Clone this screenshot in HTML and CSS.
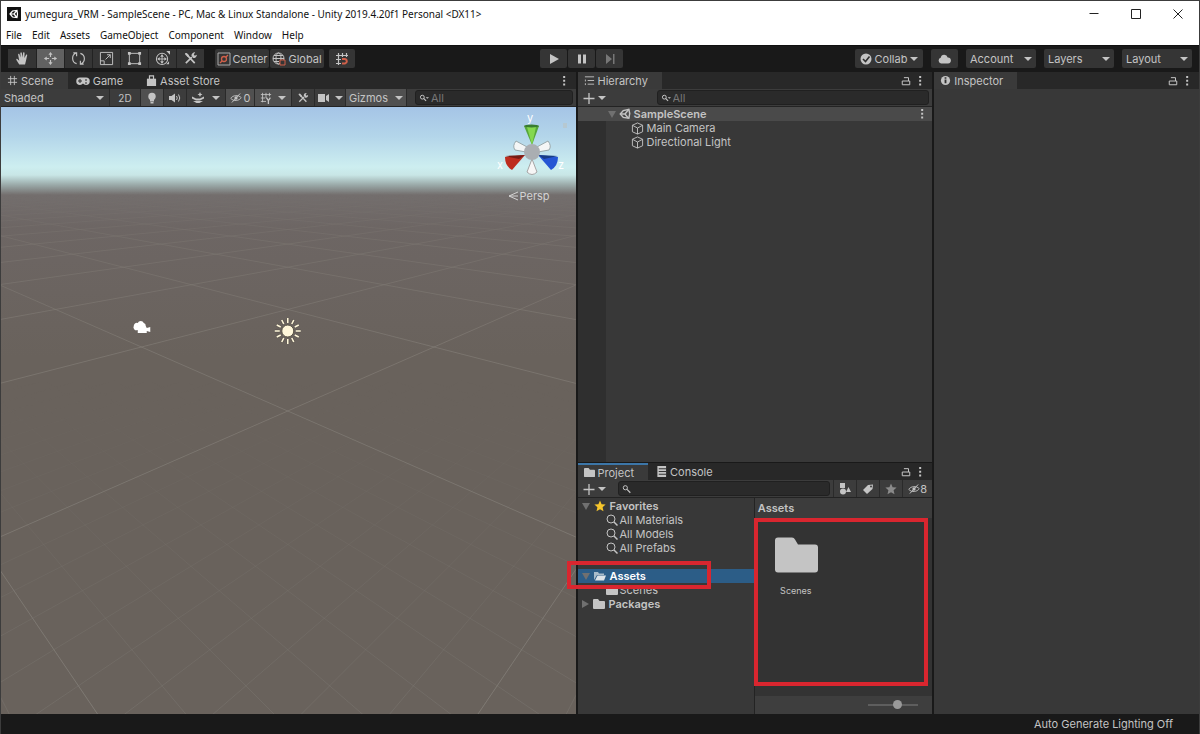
FILE: index.html
```html
<!DOCTYPE html>
<html lang="en">
<head>
  <meta charset="UTF-8" />
  <meta name="viewport" content="width=device-width, initial-scale=1.0"/>
  <title>yumegura_VRM - SampleScene - Unity</title>
  <link rel="stylesheet" href="styles.css">
</head>
<body>
  <!-- shared icons -->
  <svg class="defs" aria-hidden="true">
    <symbol id="i-tools" viewBox="0 0 16 16"><path d="M3 13 9.500 6.500M5 5l7.500 8" fill="none" stroke="currentColor" stroke-width="1.800"/><path d="M2 2.500 4 2l2.500 2.500-1.500 2L2.500 4zM9 5a3.500 3.500 0 0 1 4-3.500L11.500 3.500l1 1.500 2.300-1A3.500 3.500 0 0 1 11 7.500z" fill="currentColor"/></symbol>
    <symbol id="i-lock" viewBox="0 0 12 12"><path d="M1.500 6h9v4.500h-9zM3.500 2h5.500v4" fill="none" stroke="currentColor" stroke-width="1.200"/></symbol>
    <symbol id="i-dots" viewBox="0 0 12 12"><path d="M5 0h2.400v2.400H5zM5 4.500h2.400v2.400H5zM5 9h2.400v2.400H5z" fill="currentColor"/></symbol>
    <symbol id="i-search" viewBox="0 0 12 12"><circle cx="4" cy="4.500" r="2.500" fill="none" stroke="currentColor" stroke-width="1.200"/><path d="m6 6.500 4 4" stroke="currentColor" stroke-width="1.500"/></symbol>
    <symbol id="i-find" viewBox="0 0 12 12"><circle cx="5" cy="5" r="4" fill="none" stroke="currentColor"/><path d="m8 8 3.500 3.500" stroke="currentColor" stroke-width="1.500"/></symbol>
    <symbol id="i-searchmenu" viewBox="0 0 12 12"><circle cx="4" cy="5" r="2.300" fill="none" stroke="currentColor" stroke-width="1.200"/><path d="m5.500 6.500 3 3" stroke="currentColor" stroke-width="1.400"/><path d="M8 5h4l-2 2z" fill="currentColor"/></symbol>
    <symbol id="i-folder" viewBox="0 0 12 12"><path d="M0 2q0-1 1-1h4l1.500 2H11q1 0 1 1v6q0 1-1 1H1q-1 0-1-1z" fill="currentColor"/></symbol>
    <symbol id="i-eye" viewBox="0 0 16 14"><path d="M1 7.500C4 3 11 2.500 15 6.500 12 11 5 12 1 7.500z" fill="none" stroke="currentColor" stroke-width="1.200"/><circle cx="8" cy="7" r="2.200" fill="currentColor"/><path d="M2.500 13 13.500 1" stroke="currentColor" stroke-width="1.300"/></symbol>
    <symbol id="i-cube" viewBox="0 0 14 14"><path d="M7 1l5.500 2.500v7L7 13l-5.500-2.500v-7zM1.500 3.500 7 6.500l5.500-3M7 6.500V13" fill="none" stroke="currentColor" stroke-linejoin="round"/></symbol>
    <symbol id="i-unity" viewBox="0 0 14 14"><path d="m1.500 7 3.500-4 6.500-1.500 1 5-1 5.500L5 11z" fill="none" stroke="currentColor" stroke-width="1.700"/><path d="M1.500 7H7l4.500-5.500M7 7l4 5" fill="none" stroke="currentColor" stroke-width="1.600"/></symbol>
    <symbol id="i-star" viewBox="0 0 12 12"><path d="m6 .5 1.600 3.700 4 .4-3 2.700.9 4L6 9.200 2.500 11.300l.9-4-3-2.700 4-.4z" fill="currentColor"/></symbol>
  </svg>

  <header class="titlebar">
    <svg class="app-icon" viewBox="0 0 14 14"><path d="M0 0h14v14H0z" fill="#111"/><path d="m3 7 2.500-3L10 3.500l.5 3.500-.5 3.500L5.500 10zM3 7h4l3-3.500M7 7l3 3.500" fill="none" stroke="#fff" stroke-width="1.200"/></svg>
    <h1>yumegura_VRM - SampleScene - PC, Mac &amp; Linux Standalone - Unity 2019.4.20f1 Personal &lt;DX11&gt;</h1>
    <div class="window-buttons">
      <button aria-label="Minimize"><svg viewBox="0 0 12 12"><path d="M1.500 5.500h9" stroke="#222"/></svg></button>
      <button aria-label="Maximize"><svg viewBox="0 0 12 12"><path d="M1.500 1.500h9v9h-9z" fill="none" stroke="#222"/></svg></button>
      <button aria-label="Close"><svg viewBox="0 0 12 12"><path d="m1.500 1.500 9 9m0-9-9 9" stroke="#222"/></svg></button>
    </div>
  </header>

  <nav class="menubar">
    <button>File</button>
    <button>Edit</button>
    <button>Assets</button>
    <button>GameObject</button>
    <button>Component</button>
    <button>Window</button>
    <button>Help</button>
  </nav>

  <div class="toolbar">
    <div class="group tools">
      <button class="tool" aria-label="Hand"><svg viewBox="0 0 16 16"><path d="M4.500 14.500 1.500 9.500q-.5-1.500 1-1l2 1.800L3.300 3.800q0-1.300 1.200-.8l1.500 4-.3-5q.8-1.500 1.600 0l.7 5 .7-5.300q.8-1 1.500.1L10 7.500l2-3.800q1.200-.4 1 .8l-1.300 6-1 4z" fill="currentColor"/></svg></button>
      <button class="tool active" aria-label="Move"><svg viewBox="0 0 16 16"><path d="M8 3v3.500M8 9.500V13M3 8h3.500M9.500 8H13" stroke="currentColor" stroke-width="1.200"/><path d="M8 1l2.200 3H5.800zM8 15l2.200-3H5.800zM1 8l3-2.200v4.400zM15 8l-3-2.200v4.400z" fill="currentColor"/></svg></button>
      <button class="tool" aria-label="Rotate"><svg viewBox="0 0 16 16"><path d="M6 13.500C.5 12 .5 4.500 5 2.500M10 2.500c5.500 1.500 5.500 9 1 11M2.500 2h3.500v3.500M13.500 14H10v-3.500" fill="none" stroke="currentColor" stroke-width="1.200"/></svg></button>
      <button class="tool" aria-label="Scale"><svg viewBox="0 0 16 16"><path d="M1.500 1.500h13v13h-13zM1.500 10.500h4v4M7 9l5-5M8.500 4H12v3.500" fill="none" stroke="currentColor"/></svg></button>
      <button class="tool" aria-label="Rect"><svg viewBox="0 0 16 16"><path d="M2.500 2.500h11v11h-11z" fill="none" stroke="currentColor"/><path d="M1 1h3v3H1zM12 1h3v3h-3zM1 12h3v3H1zM12 12h3v3h-3z" fill="currentColor"/></svg></button>
      <button class="tool" aria-label="Transform"><svg viewBox="0 0 16 16"><circle cx="7.500" cy="8.500" r="6" fill="none" stroke="currentColor" stroke-width="1.100"/><path d="M7.500 4v9M3 8.500h9" stroke="currentColor"/><path d="M7.500 3.500l2 2.500h-4zM7.500 13.500l2-2.500h-4zM2.500 8.500 5 6.500v4zM12.500 8.500l-2.500-2v4zM12 0h4v4zM12 14h3v-3z" fill="currentColor"/></svg></button>
      <button class="tool" aria-label="Custom tools"><svg><use href="#i-tools"/></svg></button>
    </div>
    <div class="group pivot">
      <button><svg viewBox="0 0 14 14"><path d="M1 1h12v12H1z" fill="none" stroke="#aaa"/><circle cx="7" cy="7" r="2.500" fill="none" stroke="#d0604a" stroke-width="1.300"/><path d="m3 11 2-2m4-4 2-2" stroke="#d0604a" stroke-width="1.300"/></svg>Center</button>
      <button><svg viewBox="0 0 14 14"><circle cx="6.500" cy="6.500" r="5.500" fill="none" stroke="currentColor"/><ellipse cx="6.500" cy="6.500" rx="2.500" ry="5.500" fill="none" stroke="currentColor"/><path d="M1 6.500h11M2 3.500h9M2 9.500h5" stroke="currentColor"/><path d="M8 8h5v5H8z" fill="#353535" stroke="#d0604a"/></svg>Global</button>
    </div>
    <button class="snap" aria-label="Snap"><svg viewBox="0 0 14 14"><path d="M3.500 1v12M7.500 1v4M11.500 1v4M1 3.500h12M1 7.500h5M1 11.500h5" stroke="currentColor" stroke-width="1.200"/><path d="M7 7h3a2.300 2.300 0 0 1 0 4.500H7" fill="none" stroke="#d0604a" stroke-width="2"/></svg></button>
    <div class="group play">
      <button aria-label="Play"><svg viewBox="0 0 12 12"><path d="M2 1l9 5-9 5z" fill="currentColor"/></svg></button>
      <button aria-label="Pause"><svg viewBox="0 0 12 12"><path d="M2 1.500h3v9H2zM7 1.500h3v9H7z" fill="currentColor"/></svg></button>
      <button class="disabled" aria-label="Step"><svg viewBox="0 0 12 12"><path d="M2 1l6 5-6 5zM9 1h1.500v10H9z" fill="currentColor"/></svg></button>
    </div>
    <div class="cloud">
      <button class="collab"><svg viewBox="0 0 12 12"><circle cx="6" cy="6" r="5.500" fill="#c4c4c4"/><path d="m3 6 2.500 2.500L9.500 3.500" fill="none" stroke="#303030" stroke-width="1.600"/></svg>Collab<i class="caret"></i></button>
      <button class="services" aria-label="Services"><svg viewBox="0 0 14 12"><path d="M3.500 10.500a3 3 0 0 1-.3-5.800 3.600 3.600 0 0 1 7-.3 3 3 0 0 1 .3 6.100z" fill="currentColor"/></svg></button>
      <div class="select"><select aria-label="Account"><option>Account</option></select></div>
      <div class="select"><select aria-label="Layers"><option>Layers</option></select></div>
      <div class="select"><select aria-label="Layout"><option>Layout</option></select></div>
    </div>
  </div>

  <main class="workspace">
    <section class="panel scene">
      <div class="tabs">
        <button class="tab active"><svg viewBox="0 0 12 12"><path d="M4 1v10M8 1v10M1 4h10M1 8h10" stroke="currentColor"/></svg>Scene</button>
        <button class="tab"><svg class="pad" viewBox="0 0 14 12"><path d="M4 2.500h6a3.500 3.500 0 0 1 0 7.500Q8 9.500 7 8.500 6 9.500 4 10a3.500 3.500 0 0 1 0-7.500z" fill="currentColor"/><path d="M2 6h4M4 4v4M9 5h2M9 8h2" stroke="#282828"/></svg>Game</button>
        <button class="tab store"><svg viewBox="0 0 12 12"><path d="M1 4h10v8H1z" fill="currentColor"/><path d="M3.800 5V1h4.400v4" fill="none" stroke="currentColor" stroke-width="1.300"/></svg>Asset Store</button>
        <div class="panel-icons"><button aria-label="Scene options"><svg><use href="#i-dots"/></svg></button></div>
      </div>
      <div class="controls">
        <div class="select shading"><select aria-label="Shading mode"><option>Shaded</option></select></div>
        <button class="two-d">2D</button>
        <button class="lit on" aria-label="Lighting"><svg viewBox="0 0 12 12"><circle cx="6" cy="4.500" r="3.700" fill="currentColor"/><path d="M4 7h4v2.500H4zM4.500 10h3v1.500h-3z" fill="currentColor"/></svg></button>
        <button class="lit" aria-label="Audio"><svg viewBox="0 0 12 12"><path d="M0 4h2.500L6 1.500v9L2.500 8H0z" fill="currentColor"/><path d="M7.500 4q1.500 2 0 4M9.500 2.500q2.500 3.500 0 7" fill="none" stroke="currentColor"/></svg></button>
        <button class="fx" aria-label="Effects"><svg viewBox="0 0 12 12"><path d="M0 4.500 4 6.500h4l4-2v2L8 8.500H4l-4-2zM1 9l3.500 2h3L11 9z" fill="currentColor"/><path d="m8 0 .8 1.700 1.700.8-1.700.8L8 5l-.8-1.700-1.700-.8 1.700-.8z" fill="currentColor"/></svg><i class="caret"></i></button>
        <button class="hidden on"><svg><use href="#i-eye"/></svg>0</button>
        <button class="grid on" aria-label="Grid"><svg viewBox="0 0 14 14"><path d="M3 1v11M7 1v6M11 1v4M1 3h12M1 7h5M1 11h6" stroke="currentColor"/><path d="m7.500 6.500 2.300 3.500 2.300-3.500M9.800 10v4" fill="none" stroke="currentColor" stroke-width="1.500"/></svg><i class="caret"></i></button>
        <button class="lit" aria-label="Editor tools"><svg><use href="#i-tools"/></svg></button>
        <button class="cam" aria-label="Scene camera"><svg viewBox="0 0 12 12"><path d="M0 2h7v8H0zM8 4l3-2v8L8 8z" fill="currentColor"/></svg><i class="caret"></i></button>
        <button class="gizmos on">Gizmos<i class="caret"></i></button>
        <label class="search"><svg><use href="#i-searchmenu"/></svg><input type="search" aria-label="Search scene" placeholder="All"></label>
      </div>
      <div class="viewport">
        <svg class="ground" viewBox="0 0 575 607" preserveAspectRatio="xMidYMin slice">
          <defs>
            <linearGradient id="far" x2="0" y2="1"><stop offset=".14" stop-color="#000"/><stop offset=".22" stop-color="#888"/><stop offset=".4" stop-color="#fff"/></linearGradient>
            <linearGradient id="near" x2="0" y2="1"><stop offset=".45" stop-color="#000"/><stop offset="1" stop-color="#fff"/></linearGradient>
            <mask id="fadeMajor" maskUnits="userSpaceOnUse" x="0" y="0" width="575" height="607"><path d="M0 0h575v607H0z" fill="url(#far)"/></mask>
            <mask id="fadeMinor" maskUnits="userSpaceOnUse" x="0" y="0" width="575" height="607"><path d="M0 0h575v607H0z" fill="url(#near)"/></mask>
          </defs>
          <g mask="url(#fadeMinor)"><path id="minorGrid" class="minor"/></g>
          <g mask="url(#fadeMajor)"><path id="majorGrid" class="major"/></g>
          <!-- camera gizmo -->
          <path d="M133 219a3 3 0 0 1 4-3 3.200 3.200 0 0 1 6 0 3 3 0 0 1 2 3l1 2 3.500-1v5l-3.500-1v2h-9v-3a3 3 0 0 1-4-4z" fill="#fff"/>
          <!-- light gizmo -->
          <g transform="translate(287 224)">
            <g stroke="#4c473e" stroke-width="3" opacity=".5"><path id="rays" d="M0-8v-5M0 8v5M-8 0h-5M8 0h5M-4-7l-2-4M4-7l2-4M-4 7l-2 4M4 7l2 4M-7-4l-4-2M7-4l4-2M-7 4l-4 2M7 4l4 2"/></g>
            <use href="#rays" stroke="#fff7da" stroke-width="1.600"/>
            <circle r="6" fill="#fff7da" stroke="#5b5548"/>
          </g>
        </svg>
        <div class="orientation">
          <svg viewBox="0 0 76 70">
            <path d="m19 23 13 7-3 4-11-2q-3-4 1-9zM51 23l-13 7 3 4 11-2q3-4-1-9z" fill="#f4f6f6" stroke="#9aa9ac"/>
            <path d="m27 8 8 19 7-19z" fill="#57a63b"/><path d="m30 9 5 18 4-18z" fill="#85d84f"/><ellipse cx="34.500" cy="8" rx="7.500" ry="1.500" fill="#397c2f"/>
            <path d="m8 39 20-2-13 15q-7-4-7-13z" fill="#bd2c1f"/><path d="m8 38 20-1-6 4z" fill="#751c16"/>
            <path d="m61 39-20-2 13 15q7-4 7-13z" fill="#2556d4"/><path d="m61 38-20-1 6 4z" fill="#183b86"/>
            <path d="m35 41 5 13q-5 5-10 0z" fill="#f6f6f6" stroke="#a5a5a5"/>
            <circle cx="35" cy="34" r="8" fill="#aaaeb2"/>
            <path d="M66 5h4v5h-4z" fill="#b6c8d1"/>
            <text x="30" y="4">y</text><text x="0" y="51">x</text><text x="61" y="51">z</text>
          </svg>
          <button class="persp"><svg viewBox="0 0 10 10"><path d="M10 1 1 5l9 4M1 5h9" fill="none" stroke="currentColor"/></svg>Persp</button>
        </div>
      </div>
    </section>

    <div class="middle">
      <section class="panel hierarchy">
        <div class="tabs">
          <button class="tab active"><svg viewBox="0 0 12 12"><path d="M1 2h10M4 6h7M4 10h7M1.500 5v2M1.500 9v2" stroke="currentColor"/></svg>Hierarchy</button>
          <div class="panel-icons">
            <button aria-label="Lock"><svg><use href="#i-lock"/></svg></button>
            <button aria-label="Hierarchy options"><svg><use href="#i-dots"/></svg></button>
          </div>
        </div>
        <div class="controls">
          <button class="add" aria-label="Create"><svg viewBox="0 0 12 12"><path d="M6 1v11M.5 6.500h11" stroke="currentColor" stroke-width="1.300"/></svg><i class="caret"></i></button>
          <label class="search"><svg><use href="#i-searchmenu"/></svg><input type="search" aria-label="Search hierarchy" placeholder="All"></label>
        </div>
        <div class="objects">
          <div class="row scene-row"><i class="fold"></i><svg><use href="#i-unity"/></svg><b>SampleScene</b><svg class="more"><use href="#i-dots"/></svg></div>
          <div class="row object"><svg><use href="#i-cube"/></svg>Main Camera</div>
          <div class="row object"><svg><use href="#i-cube"/></svg>Directional Light</div>
        </div>
      </section>

      <section class="panel project">
        <div class="tabs">
          <button class="tab active focus"><svg><use href="#i-folder"/></svg>Project</button>
          <button class="tab"><svg viewBox="0 0 12 12"><path d="M1.500 0H11v12H1.500z" fill="currentColor"/><path d="M3 3h8M3 6h8M3 9h8" stroke="#282828"/></svg>Console</button>
          <div class="panel-icons">
            <button aria-label="Lock"><svg><use href="#i-lock"/></svg></button>
            <button aria-label="Project options"><svg><use href="#i-dots"/></svg></button>
          </div>
        </div>
        <div class="controls">
          <button class="add" aria-label="Create"><svg viewBox="0 0 12 12"><path d="M6 1v11M.5 6.500h11" stroke="currentColor" stroke-width="1.300"/></svg><i class="caret"></i></button>
          <label class="search"><svg><use href="#i-search"/></svg><input type="search" aria-label="Search project"></label>
          <button class="filter" aria-label="Search by type"><svg viewBox="0 0 12 12"><path d="M1 0h5v5H1zM7 9l2.500-5L12 9z" fill="currentColor"/><circle cx="4" cy="8.500" r="3" fill="currentColor"/></svg></button>
          <button class="filter" aria-label="Search by label"><svg viewBox="0 0 12 12"><path d="m6 2 5-.5-.5 4.500L5 11 1 7z" fill="currentColor"/><circle cx="9" cy="3.500" r="1" fill="#3c3c3c"/></svg></button>
          <button class="filter dim" aria-label="Save search"><svg><use href="#i-star"/></svg></button>
          <button class="filter count"><svg><use href="#i-eye"/></svg>8</button>
        </div>
        <div class="browser">
          <div class="tree">
            <div class="row"><i class="fold"></i><svg class="gold"><use href="#i-star"/></svg><b>Favorites</b></div>
            <div class="row child"><svg><use href="#i-find"/></svg>All Materials</div>
            <div class="row child"><svg><use href="#i-find"/></svg>All Models</div>
            <div class="row child"><svg><use href="#i-find"/></svg>All Prefabs</div>
            <div class="row spacer"></div>
            <div class="row selected"><i class="fold"></i><svg viewBox="0 0 12 12"><path d="M0 10V2h4l1 1.500h5V5H3z" fill="#a9bcca"/><path d="M3.500 5.500H12L10 10.500H1z" fill="#dce3e8"/></svg><b>Assets</b><span class="mark"></span></div>
            <div class="row child"><svg><use href="#i-folder"/></svg>Scenes</div>
            <div class="row"><i class="fold closed"></i><svg><use href="#i-folder"/></svg><b>Packages</b></div>
          </div>
          <div class="files">
            <div class="path"><b>Assets</b></div>
            <div class="items">
              <a class="item" href="#"><svg viewBox="0 0 44 36"><path d="M1 4q0-3 3-3h14q2 0 3 2l3 5h17q3 0 3 3v22q0 3-3 3H4q-3 0-3-3z" fill="#c4c4c4"/></svg>Scenes</a>
              <span class="mark"></span>
            </div>
            <div class="zoom"><input type="range" aria-label="Icon size" min="0" max="100" value="60"></div>
          </div>
        </div>
      </section>
    </div>

    <section class="panel inspector">
      <div class="tabs">
        <button class="tab active"><svg viewBox="0 0 12 12"><circle cx="6" cy="6" r="5" fill="currentColor"/><path d="M5 2.500h2v1.500H5zM5 5h2v4H5z" fill="#303030"/></svg>Inspector</button>
        <div class="panel-icons">
          <button aria-label="Lock"><svg><use href="#i-lock"/></svg></button>
          <button aria-label="Inspector options"><svg><use href="#i-dots"/></svg></button>
        </div>
      </div>
    </section>
  </main>

  <footer>Auto Generate Lighting Off</footer>

  <script src="scene.js"></script>
</body>
</html>
```
FILE: styles.css
```css
* {
  box-sizing: border-box;
}
body {
  margin: 0;
  min-height: 100vh;
  display: flex;
  flex-direction: column;
  background: #191919;
  color: #c4c4c4;
  font-family: Inter, "Liberation Sans", sans-serif;
  font-size: 11px;
  line-height: 14px;
  border: 1px solid #3c3c3c;
  border-bottom: 0;
}
button, input, select {
  font: inherit;
  color: inherit;
  background: none;
  border: 0;
  margin: 0;
  padding: 0;
}
button {
  display: flex;
  align-items: center;
  justify-content: center;
  white-space: nowrap;
}
svg {
  display: block;
  width: 12px;
  height: 12px;
  flex: none;
}
.defs {
  display: none;
}

/* window frame */
.titlebar {
  height: 25px;
  padding-left: 6px;
  display: flex;
  align-items: center;
  background: #fff;
  color: #111;
}
.app-icon {
  width: 14px;
  height: 14px;
}
.titlebar h1 {
  margin: 0 0 0 4px;
  font: 400 10px/14px "Noto Sans", sans-serif;
  white-space: nowrap;
}
.window-buttons {
  display: flex;
  margin-left: auto;
}
.window-buttons button {
  width: 42px;
  height: 24px;
}
.menubar {
  height: 19px;
  padding-left: 5px;
  display: flex;
  gap: 10px;
  background: #fff;
  color: #111;
  font: 400 10px/14px "Noto Sans", sans-serif;
}
.menubar button {
  height: 18px;
}

/* main toolbar */
.toolbar {
  height: 27px;
  padding: 0 7px 1px;
  display: flex;
  align-items: center;
  border-top: 1px solid #101010;
}
.toolbar button, .toolbar .select {
  height: 19px;
  background: #353535;
  border-radius: 2px;
}
.group {
  display: flex;
  gap: 1px;
}
.toolbar .tools button {
  width: 28px;
  border-radius: 0;
}
.tools {
  gap: 0;
}
.tool + .tool {
  border-left: 1px solid #222;
}
.tool svg {
  width: 15px;
  height: 15px;
}
.toolbar .tool.active {
  background: #616161;
}
.pivot {
  margin-left: 11px;
}
.pivot button {
  width: 54px;
  gap: 2px;
}
.pivot svg, .snap svg {
  width: 14px;
  height: 14px;
}
.snap {
  width: 26px;
  margin-left: 5px;
}
.play {
  margin: 0 auto;
  padding-right: 47px;
}
.play button {
  width: 27px;
}
.play .disabled {
  color: #777;
}
.cloud {
  display: flex;
  gap: 8px;
}
.collab {
  width: 68px;
  gap: 3px;
}
.services {
  width: 27px;
}
.services svg {
  width: 15px;
}
.cloud .select {
  width: 70px;
  padding: 0 4px;
}

.caret, .select::after {
  content: "";
  flex: none;
  border: 4px solid transparent;
  border-top: 4px solid currentColor;
  border-bottom: 0;
}
.select {
  display: flex;
  align-items: center;
}
.select select {
  appearance: none;
  flex: 1;
  min-width: 0;
}

/* docked panels */
.workspace {
  flex: 1;
  display: grid;
  grid-template-columns: 575fr 355fr 265fr;
  gap: 2px;
}
.panel {
  display: flex;
  flex-direction: column;
  background: #383838;
  min-width: 0;
}
.middle {
  display: grid;
  grid-template-rows: 391fr 251fr;
  gap: 1px;
  min-width: 0;
}
.tabs {
  height: 17px;
  display: flex;
  background: #282828;
}
.tab {
  padding: 0 8px;
  gap: 3px;
  height: 17px;
}
.tab.active {
  background: #3a3a3a;
  padding: 0 14px 0 6px;
}
.tab.focus {
  border-top: 2px solid #3c76a8;
}
.tab svg {
  width: 11px;
  height: 11px;
}
.tab .pad {
  width: 14px;
  height: 12px;
}
.tab.store {
  margin-left: 7px;
}
.panel-icons {
  margin-left: auto;
  padding-right: 7px;
  display: flex;
  gap: 4px;
}
.panel-icons svg {
  width: 10px;
  height: 10px;
}
.controls {
  height: 18px;
  display: flex;
  background: #3c3c3c;
  border-bottom: 1px solid #232323;
}
.controls button {
  height: 17px;
}
.controls .on {
  background: #505050;
}
.search {
  flex: 1;
  margin: 1px 3px 1px 8px;
  padding-left: 3px;
  display: flex;
  align-items: center;
  background: #2a2a2a;
  border: 1px solid #202020;
  border-radius: 3px;
  min-width: 0;
}
.search svg {
  width: 10px;
  height: 10px;
}
.search input {
  flex: 1;
  min-width: 0;
  width: 0;
  padding-left: 2px;
  height: 14px;
  outline: 0;
}
.search input::placeholder {
  color: #777;
}

/* scene */
.scene .controls button {
  border-right: 1px solid #2a2a2a;
}
.shading {
  width: 109px;
  padding: 0 5px 0 3px;
  border-right: 1px solid #2a2a2a;
}
.two-d {
  width: 31px;
  font-size: 10px;
}
.lit {
  width: 23px;
}
.fx {
  width: 39px;
  gap: 8px;
}
.hidden {
  width: 29px;
  gap: 2px;
}
.grid {
  width: 37px;
  gap: 6px;
}
.cam {
  width: 31px;
  gap: 5px;
}
.gizmos {
  width: 61px;
  gap: 7px;
}
.viewport {
  flex: 1;
  position: relative;
  overflow: hidden;
  background: linear-gradient(#a5c4e6, #b4d6ea 30px, #cdeef0 60px, #c8e6e6 68px, #9aa9a8 78px, #736e6d 88px, #6d6664 120px, #69625c 250px, #69625c);
}
.ground {
  position: absolute;
  inset: 0;
  width: 100%;
  height: 100%;
}
.major, .minor {
  fill: none;
  stroke: #85807a;
  stroke-opacity: .6;
}
.minor {
  stroke-opacity: .35;
}
.orientation {
  position: absolute;
  top: 11px;
  right: 3px;
  color: #d3d3d3;
}
.orientation > svg {
  width: 76px;
  height: 70px;
  overflow: visible;
}
.orientation text {
  fill: #fff;
  font-size: 11px;
}
.persp {
  margin: 1px 0 0 11px;
  gap: 2px;
}
.persp svg {
  width: 10px;
  height: 10px;
}

/* hierarchy */
.add {
  padding: 0 5px;
  gap: 3px;
}
.hierarchy .search {
  margin-left: 46px;
}
.objects {
  flex: 1;
  background: linear-gradient(90deg, #2f2f2f 28px, #383838 28px);
}
.row {
  height: 14px;
  display: flex;
  align-items: center;
  gap: 3px;
  white-space: nowrap;
}
.scene-row {
  padding: 0 5px 0 30px;
  background: #4a4a4a;
}
.more {
  margin-left: auto;
  width: 10px;
  height: 10px;
}
.object {
  padding-left: 53px;
}
.object svg {
  width: 13px;
  height: 13px;
}
.fold {
  flex: none;
  border: 4px solid transparent;
  border-top: 7px solid #707070;
  border-bottom: 0;
}
.fold.closed {
  border: 4px solid transparent;
  border-left: 7px solid #707070;
  border-right: 0;
}
b {
  font-weight: 600;
}

/* project */
.project .search {
  margin-left: 7px;
}
.filter {
  width: 23px;
  border-left: 1px solid #2a2a2a;
}
.filter.dim {
  color: #8a8a8a;
}
.filter.count {
  width: 30px;
}
.browser {
  flex: 1;
  display: grid;
  grid-template-columns: 176fr 178fr;
}
.tree {
  padding-top: 1px;
}
.tree .row {
  padding-left: 4px;
  gap: 4px;
}
.tree .child {
  padding-left: 28px;
  gap: 2px;
}
.tree .selected {
  position: relative;
  background: #2c5d87;
  color: #fff;
}
.gold {
  color: #f5c52c;
}
.mark {
  position: absolute;
  z-index: 2;
  border: 4px solid #d9262f;
}
.selected .mark {
  inset: -8px 43px -6px -11px;
}
.files {
  display: flex;
  flex-direction: column;
  border-left: 1px solid #232323;
  background: #333;
}
.path {
  height: 20px;
  padding: 3px;
  background: #3c3c3c;
}
.items {
  flex: 1;
  position: relative;
  padding: 18px 19px;
}
.items .mark {
  inset: 0 4px 10px -1px;
}
.item {
  width: 44px;
  display: flex;
  flex-direction: column;
  align-items: center;
  gap: 11px;
  color: inherit;
  text-decoration: none;
  font-size: 9px;
}
.item svg {
  width: 44px;
  height: 37px;
}
.zoom {
  height: 18px;
  padding: 0 14px;
  display: flex;
  align-items: center;
  justify-content: flex-end;
  background: #3e3e3e;
}
.zoom input {
  appearance: none;
  width: 50px;
  height: 2px;
  background: #5e5e5e;
}
.zoom input::-webkit-slider-thumb {
  appearance: none;
  width: 9px;
  height: 9px;
  border-radius: 50%;
  background: #999;
}

footer {
  height: 20px;
  padding: 3px 26px;
  text-align: right;
}
```
FILE: scene.js
```js
// ground plane seen from the scene camera, grid turned 45 degrees
const HORIZON = 58;
const CENTER_X = 287;

function project(i, j) {
  const w = 0.004065 + 0.00143 * (i + j);
  return (CENTER_X + (i - j) * 0.804 / w).toFixed(1) + " " + (HORIZON + 1 / w).toFixed(1);
}

function gridPath(step, from, to) {
  let d = "";
  for (let n = Math.round(from / step); n <= to / step; n++) {
    const i = n * step;
    // start just in front of the camera
    const start = -1.9 - i;
    d += "M" + project(i, start) + "L" + project(i, 30);
    d += "M" + project(start, i) + "L" + project(30, i);
  }
  return d;
}

document.getElementById("majorGrid").setAttribute("d", gridPath(1, -8, 16));
document.getElementById("minorGrid").setAttribute("d", gridPath(0.1, -3, 3));
```
